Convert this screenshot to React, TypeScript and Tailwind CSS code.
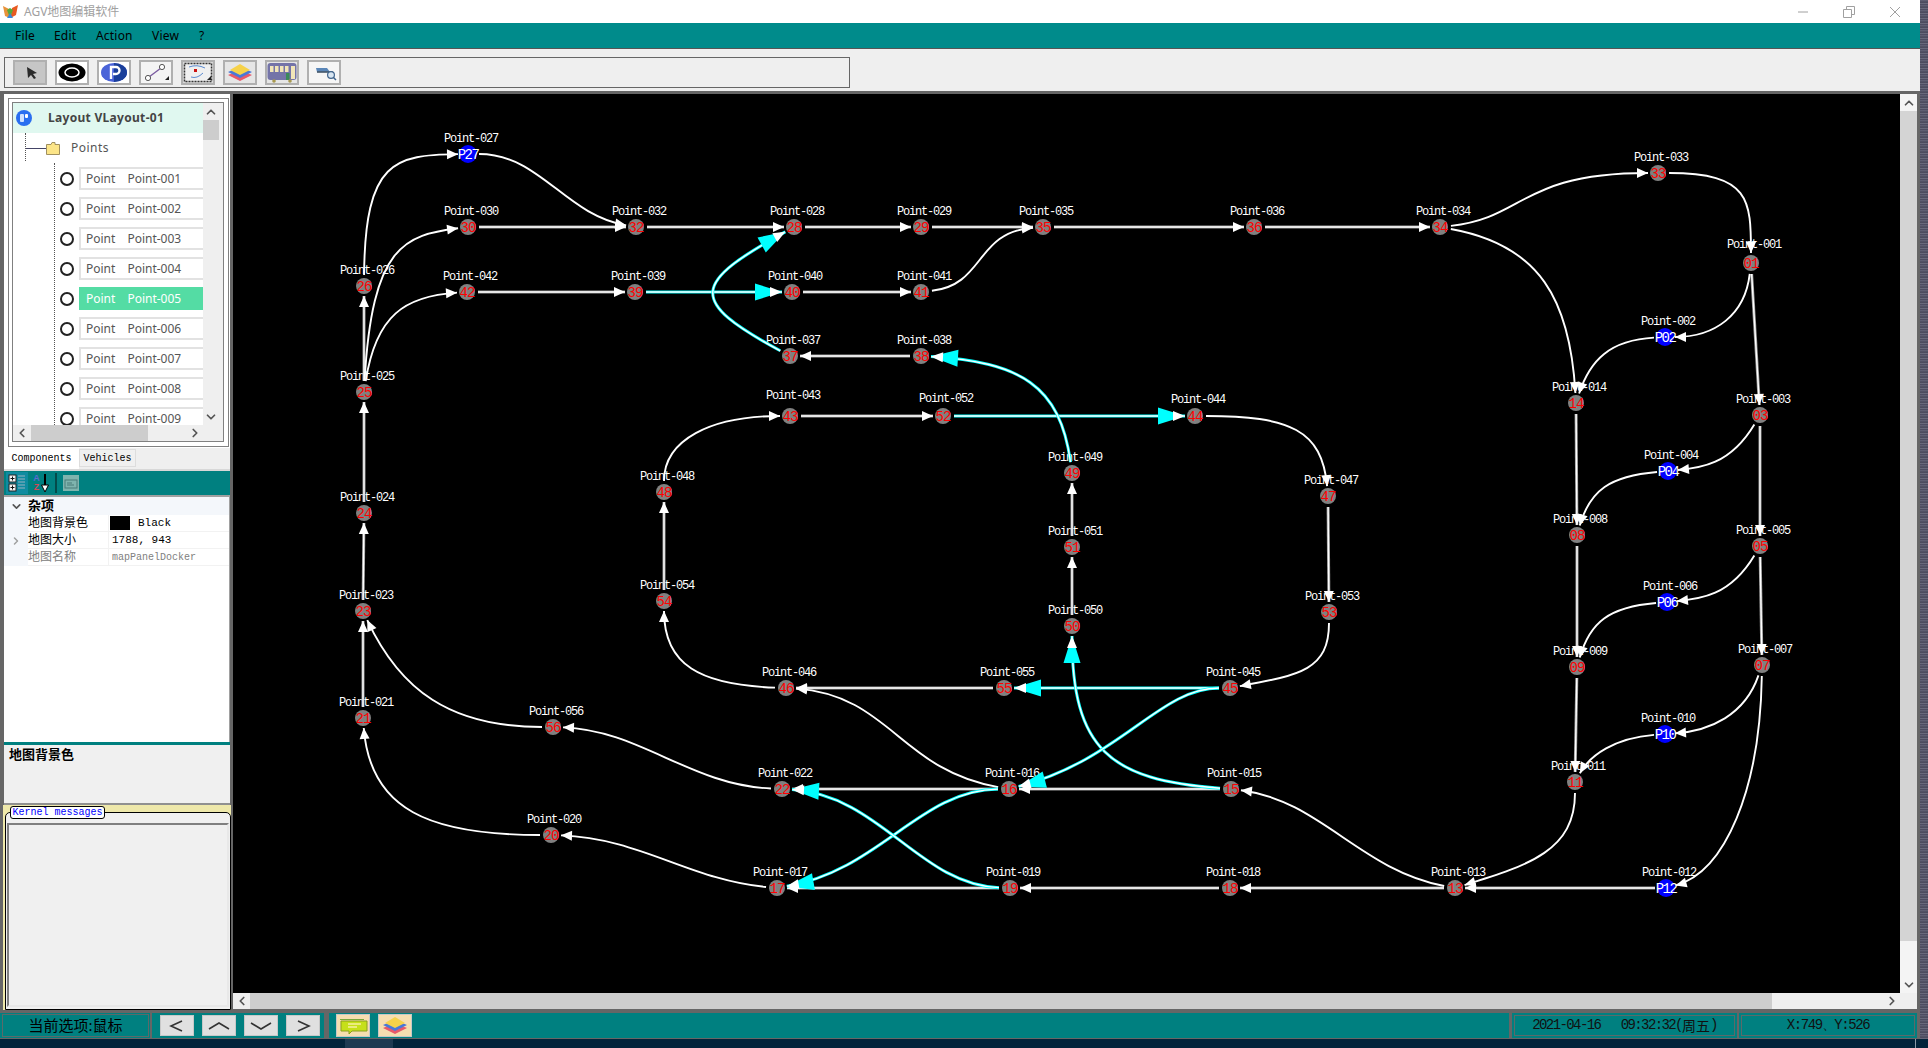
import { ChevronDown, ChevronLeft, ChevronRight, ChevronUp } from "lucide-react";

type Pt = [number, number];

// node id -> page coordinates
const nodes: Record<string, Pt> = {
  "001": [1751, 263], "002": [1665, 337], "003": [1760, 415], "004": [1668, 471], "005": [1760, 546],
  "006": [1667, 602], "007": [1762, 665], "008": [1577, 535], "009": [1577, 667], "010": [1665, 734],
  "011": [1575, 782], "012": [1666, 888], "013": [1455, 888], "014": [1576, 403], "015": [1231, 789],
  "016": [1009, 789], "017": [777, 888], "018": [1230, 888], "019": [1010, 888], "020": [551, 835],
  "021": [363, 718], "022": [782, 789], "023": [363, 611], "024": [364, 513], "025": [364, 392],
  "026": [364, 286], "027": [468, 154], "028": [794, 227], "029": [921, 227], "030": [468, 227],
  "032": [636, 227], "033": [1658, 173], "034": [1440, 227], "035": [1043, 227], "036": [1254, 227],
  "037": [790, 356], "038": [921, 356], "039": [635, 292], "040": [792, 292], "041": [921, 292],
  "042": [467, 292], "043": [790, 416], "044": [1195, 416], "045": [1230, 688], "046": [786, 688],
  "047": [1328, 496], "048": [664, 492], "049": [1072, 473], "050": [1072, 626], "051": [1072, 547],
  "052": [943, 416], "053": [1329, 612], "054": [664, 601], "055": [1004, 688], "056": [553, 727],
};

const parking = ["002", "004", "006", "010", "012", "027"];

// a few labels sit higher than the rest
const labelLift: Record<string, number> = { "043": 5, "052": 2, "044": 1, "001": 3 };

const straight = [
  "030-032", "032-028", "028-029", "029-035", "035-036", "036-034", "042-039", "040-041", "038-037",
  "043-052", "055-046", "016-022", "015-016", "018-019", "013-018", "019-017", "012-013", "025-026",
  "024-025", "023-024", "021-023", "001-003", "003-005", "005-007", "014-008", "008-009", "009-011",
  "047-053", "051-049", "050-051", "054-048",
];

const curves: [string, string, Pt, Pt][] = [
  ["026", "027", [365, 160], [395, 155]],
  ["025", "030", [372, 245], [405, 235]],
  ["025", "042", [376, 315], [405, 296]],
  ["027", "032", [540, 154], [565, 215]],
  ["034", "033", [1525, 218], [1520, 173]],
  ["033", "001", [1750, 173], [1751, 200]],
  ["001", "002", [1745, 315], [1715, 337]],
  ["002", "014", [1610, 340], [1590, 360]],
  ["034", "014", [1540, 245], [1570, 300]],
  ["003", "004", [1730, 465], [1700, 468]],
  ["004", "008", [1610, 476], [1590, 490]],
  ["005", "006", [1730, 596], [1700, 599]],
  ["006", "009", [1609, 607], [1590, 622]],
  ["007", "010", [1745, 715], [1710, 731]],
  ["010", "011", [1615, 738], [1590, 755]],
  ["007", "012", [1760, 790], [1725, 872]],
  ["011", "013", [1575, 850], [1530, 865]],
  ["013", "015", [1360, 870], [1320, 800]],
  ["016", "046", [900, 770], [890, 695]],
  ["022", "056", [690, 785], [640, 730]],
  ["056", "023", [450, 727], [400, 690]],
  ["020", "021", [430, 835], [370, 810]],
  ["017", "020", [690, 880], [640, 838]],
  ["046", "054", [700, 685], [664, 665]],
  ["048", "043", [664, 440], [710, 416]],
  ["044", "047", [1290, 416], [1322, 430]],
  ["053", "045", [1329, 670], [1300, 675]],
  ["041", "035", [985, 285], [975, 232]],
];

const cyanStraight = ["039-040", "052-044", "045-055"];

const cyanCurves: [string, string, Pt, Pt][] = [
  ["037", "028", [686, 300], [693, 283]],
  ["049", "038", [1060, 385], [1020, 362]],
  ["015", "050", [1110, 780], [1072, 750]],
  ["045", "016", [1160, 688], [1120, 760]],
  ["016", "017", [920, 790], [880, 870]],
  ["019", "022", [920, 885], [880, 795]],
];

function towards(a: Pt, b: Pt, d: number): Pt {
  const dx = b[0] - a[0];
  const dy = b[1] - a[1];
  const len = Math.hypot(dx, dy) || 1;
  return [a[0] + (dx / len) * d, a[1] + (dy / len) * d];
}

function Arrow({ tip, from, len, half, fill }: { tip: Pt; from: Pt; len: number; half: number; fill: string }) {
  const base = towards(tip, from, len);
  const nx = -(from[1] - tip[1]);
  const ny = from[0] - tip[0];
  const n = Math.hypot(nx, ny) || 1;
  const a = [base[0] + (nx / n) * half, base[1] + (ny / n) * half];
  const b = [base[0] - (nx / n) * half, base[1] - (ny / n) * half];
  return <polygon points={`${tip[0]},${tip[1]} ${a[0]},${a[1]} ${b[0]},${b[1]}`} fill={fill} />;
}

function Edge({ from, to, c1, c2, cyan }: { from: string; to: string; c1?: Pt; c2?: Pt; cyan?: boolean }) {
  const a = nodes[from];
  const b = nodes[to];
  const s = towards(a, c1 ?? b, 11);
  const e = towards(b, c2 ?? a, 10);
  const d = c1 && c2 ? `M${s[0]} ${s[1]}C${c1[0]} ${c1[1]} ${c2[0]} ${c2[1]} ${e[0]} ${e[1]}` : `M${s[0]} ${s[1]}L${e[0]} ${e[1]}`;
  const back = c2 ?? a;
  return (
    <g fill="none">
      {cyan ? (
        <>
          <path d={d} stroke="#00ffff" strokeWidth={3} />
          <path d={d} stroke="#ffffff" strokeWidth={1.4} />
          <Arrow tip={e} from={back} len={27} half={8.5} fill="#00ffff" />
          <Arrow tip={e} from={back} len={12} half={5} fill="#ffffff" />
        </>
      ) : c1 ? (
        <>
          <path d={d} stroke="#ffffff" strokeWidth={1.9} />
          <Arrow tip={e} from={back} len={11} half={5} fill="#ffffff" />
        </>
      ) : (
        <>
          <path d={d} stroke="#9a9a9a" strokeWidth={3} />
          <path d={d} stroke="#ffffff" strokeWidth={1.4} />
          <Arrow tip={e} from={back} len={11} half={5} fill="#ffffff" />
        </>
      )}
    </g>
  );
}

function MapGraph() {
  const ids = Object.keys(nodes);
  return (
    <svg className="absolute inset-0 font-['Liberation_Mono',monospace]" width={1666} height={899} viewBox="234 94 1666 899">
      {ids.map((id) => (
        <text
          key={id}
          x={nodes[id][0] + 3}
          y={nodes[id][1] - 12 - (labelLift[id] ?? 0)}
          textAnchor="middle"
          fontSize={12}
          letterSpacing={-1.2}
          fill="#ffffff"
        >
          {`Point-${id}`}
        </text>
      ))}
      {straight.map((s) => {
        const [a, b] = s.split("-");
        return <Edge key={s} from={a} to={b} />;
      })}
      {curves.map(([a, b, c1, c2]) => (
        <Edge key={a + b} from={a} to={b} c1={c1} c2={c2} />
      ))}
      {cyanStraight.map((s) => {
        const [a, b] = s.split("-");
        return <Edge key={s} from={a} to={b} cyan />;
      })}
      {cyanCurves.map(([a, b, c1, c2]) => (
        <Edge key={a + b} from={a} to={b} c1={c1} c2={c2} cyan />
      ))}
      {ids.map((id) => {
        const p = parking.includes(id);
        return (
          <g key={id}>
            <circle cx={nodes[id][0]} cy={nodes[id][1]} r={p ? 9 : 8} fill={p ? "#0000ff" : "#808080"} />
            <text
              x={nodes[id][0]}
              y={nodes[id][1] + 5}
              textAnchor="middle"
              fontSize={14}
              letterSpacing={p ? -1.6 : -1}
              fill={p ? "#ffffff" : "#ff0000"}
            >
              {p ? `P${id.slice(1)}` : id.slice(1)}
            </text>
          </g>
        );
      })}
    </svg>
  );
}

function ToolButton({ active, children }: { active?: boolean; children: React.ReactNode }) {
  return (
    <div className={`w-[34px] h-[25px] border-2 border-[#b0b0b0] flex items-center justify-center ${active ? "bg-[#c6c6c6]" : "bg-[#e6e6e6]"}`}>
      {children}
    </div>
  );
}

function Toolbar() {
  return (
    <div className="h-[42px] bg-[#efefef] pt-[8px] pl-[4px] pr-[0px]">
      <div className="w-[846px] h-[31px] border border-[#666666] flex items-center gap-[8px] pl-[8px]">
        <ToolButton active>
          <svg className="ml-[3px]" width="14" height="14" viewBox="0 0 14 14"><path d="M2 1 L12 7 L8 8 L11 12 L9 13 L6 9 L3 12Z" fill="#2a2a2a" /></svg>
        </ToolButton>
        <ToolButton>
          <svg width="30" height="21" viewBox="0 0 30 21">
            <rect width="30" height="21" fill="#ffffff" />
            <ellipse cx="15" cy="10.5" rx="13.5" ry="9" fill="#000000" />
            <ellipse cx="15" cy="10.5" rx="7" ry="4.5" fill="none" stroke="#ffffff" strokeWidth="1.5" />
          </svg>
        </ToolButton>
        <ToolButton>
          <svg width="30" height="21" viewBox="0 0 30 21">
            <rect width="30" height="21" fill="#ffffff" />
            <ellipse cx="15" cy="10.5" rx="13" ry="9.5" fill="#4a63d8" />
            <path d="M15 1 A13 9.5 0 0 1 15 20Z" fill="#1a3f9a" />
            <path d="M12 17V5h5a3.5 3.5 0 0 1 0 7h-3" fill="none" stroke="#ffffff" strokeWidth="2.4" />
          </svg>
        </ToolButton>
        <ToolButton>
          <svg width="30" height="21" viewBox="0 0 30 21">
            <rect width="30" height="21" fill="#f4f4f4" />
            <path d="M8 15 L20 6" stroke="#7a5aa0" strokeWidth="1.3" />
            <circle cx="7" cy="16" r="2.6" fill="#ffffff" stroke="#555555" />
            <circle cx="21" cy="5" r="2.6" fill="#ffffff" stroke="#555555" />
            <path d="M24 18 L28 18 L28 14Z" fill="#222222" />
          </svg>
        </ToolButton>
        <ToolButton>
          <svg width="30" height="21" viewBox="0 0 30 21">
            <rect width="30" height="21" fill="#d8d8d8" />
            <rect x="1.5" y="1.5" width="27" height="18" fill="#f0f0f0" stroke="#333333" strokeWidth="1.5" strokeDasharray="2 1" />
            <path d="M6 5 Q14 2 22 6 M8 15 Q14 17 20 11" fill="none" stroke="#5a8ad0" strokeWidth="1" />
            <rect x="11" y="7" width="3" height="3" fill="#cc1111" />
            <path d="M24 18 L28 18 L28 14Z" fill="#222222" />
          </svg>
        </ToolButton>
        <ToolButton>
          <svg width="26" height="19" viewBox="0 0 26 19">
            <path d="M1 12 L13 7 L25 12 L13 18Z" fill="#e85a6a" />
            <path d="M1 9 L13 4 L25 9 L13 15Z" fill="#4a78d8" />
            <path d="M3 7 L13 1 L23 7 L13 12Z" fill="#f6d24a" />
          </svg>
        </ToolButton>
        <ToolButton>
          <svg width="30" height="21" viewBox="0 0 30 21">
            <rect x="0.5" y="1" width="29" height="17" rx="3" fill="#7474a8" />
            <rect x="3" y="4" width="3.5" height="6" fill="#f2e6b8" />
            <rect x="8" y="4" width="3.5" height="6" fill="#f2e6b8" />
            <rect x="13" y="4" width="3.5" height="6" fill="#f2e6b8" />
            <rect x="18" y="4" width="3.5" height="6" fill="#f2e6b8" />
            <rect x="24" y="4" width="4" height="13" fill="#f2e6b8" />
            <rect x="19" y="11" width="3.5" height="7" fill="#3a8a5a" />
            <circle cx="7" cy="19" r="1.8" fill="#a89a50" />
            <circle cx="23" cy="19" r="1.8" fill="#a89a50" />
          </svg>
        </ToolButton>
        <ToolButton>
          <svg width="30" height="21" viewBox="0 0 30 21">
            <rect width="30" height="21" fill="#f6f6f6" />
            <path d="M7 6 H18 L21 10 H8Z" fill="#5a86b8" />
            <path d="M8 10 H24" stroke="#44576a" strokeWidth="1.6" />
            <circle cx="22" cy="13" r="3.4" fill="#d8e6f2" stroke="#40648c" strokeWidth="1.2" />
            <path d="M24.5 15.5 L27 18" stroke="#40648c" strokeWidth="1.5" />
          </svg>
        </ToolButton>
      </div>
    </div>
  );
}

function TreeRow({ name, selected }: { name: string; selected?: boolean }) {
  return (
    <div className="h-[30px] relative flex items-start pl-[60px] shrink-0">
      <div className="w-[14px] h-[25px] flex items-center">
        <span className="block w-[14px] h-[14px] rounded-full border-2 border-[#222222] bg-white" />
      </div>
      <div
        className={`ml-[5px] mt-[1px] w-[124px] h-[23px] flex items-center gap-[12px] text-[12px] shrink-0 ${
          selected ? "bg-[#54dca4] text-white pl-[7px]" : "bg-white border-2 border-r-0 border-[#e2e2e2] pl-[5px] text-[#555555]"
        }`}
      >
        <span>Point</span>
        <span>{name}</span>
      </div>
    </div>
  );
}

function TreePanel() {
  const rows = ["001", "002", "003", "004", "005", "006", "007", "008", "009"];
  return (
    <div className="h-[354px] bg-white pt-[4px] pl-[4px] pr-[1px] pb-[1px] shrink-0">
      <div className="h-full border border-[#808080] pt-[3px] pl-[3px] pr-[4px] pb-[4px]">
        <div className="h-full border border-[#808080] flex flex-col bg-[#efefef] pl-[0px]">
          <div className="flex-1 flex min-h-0">
            <div className="w-[190px] overflow-hidden bg-white flex flex-col">
              <div className="h-[30px] shrink-0 bg-[#e0f8f0] flex items-center pl-[3px] gap-[16px]">
                <svg width="16" height="16" viewBox="0 0 16 16">
                  <circle cx="8" cy="8" r="8" fill="#2a6ef0" />
                  <rect x="4" y="4" width="4" height="8" rx="1" fill="#cfe0ff" />
                  <rect x="9" y="4" width="3" height="4" rx="1" fill="#ffffff" />
                </svg>
                <span className="text-[12px] font-bold text-[#444444] tracking-[0.3px]">Layout VLayout-01</span>
              </div>
              <div className="h-[30px] shrink-0 flex items-center pl-[12px] relative">
                <span className="absolute left-[12px] top-0 h-[28px] border-l border-dotted border-[#555555]" />
                <span className="block w-[21px] border-t border-[#444466]" />
                <svg width="14" height="14" viewBox="0 0 14 14">
                  <path d="M0.5 3.5 H5 L6 1.5 H9 V3.5 H13.5 V13.5 H0.5Z" fill="#fce588" stroke="#a09060" />
                </svg>
                <span className="ml-[11px] text-[12px] tracking-[0.5px] text-[#555555]">Points</span>
              </div>
              <div className="flex-1 min-h-0 overflow-hidden relative flex flex-col pt-[3px] -ml-[13px]">
                <span className="absolute left-[54px] top-0 bottom-0 border-l border-dotted border-[#555555]" />
                {rows.map((r) => (
                  <TreeRow key={r} name={`Point-${r}`} selected={r === "005"} />
                ))}
              </div>
            </div>
            <div className="w-[16px] bg-[#efefef] flex flex-col items-center">
              <ChevronUp size={14} strokeWidth={3} color="#555555" className="mt-[2px] shrink-0" />
              <div className="w-full h-[20px] mt-[1px] bg-[#cdcdcd]" />
              <div className="flex-1" />
              <ChevronDown size={14} strokeWidth={3} color="#555555" className="mb-[1px]" />
            </div>
          </div>
          <div className="h-[16px] flex items-center bg-[#efefef]">
            <ChevronLeft size={14} strokeWidth={3} color="#555555" className="ml-[2px]" />
            <div className="ml-[2px] w-[117px] h-full bg-[#cdcdcd]" />
            <ChevronRight size={14} strokeWidth={3} color="#555555" className="ml-[40px]" />
          </div>
        </div>
      </div>
    </div>
  );
}

function PropRow({ name, value, swatch, muted, expand }: { name: string; value: string; swatch?: boolean; muted?: boolean; expand?: boolean }) {
  return (
    <div className="h-[17px] flex items-stretch">
      <div className="w-[24px] bg-[#f4f7fb] flex items-center justify-center">
        {expand && <ChevronRight size={12} strokeWidth={3} color="#a0a0a0" />}
      </div>
      <div className={`w-[80px] flex items-center text-[12px] border-b border-[#f2f2f2] ${muted ? "text-[#808080]" : "text-black"}`}>{name}</div>
      <div className={`flex-1 border-l border-b border-[#f2f2f2] flex items-center pl-[3px] font-['Liberation_Mono',monospace] ${muted ? "text-[#808080] text-[10px]" : "text-[11px] text-black"}`}>
        {swatch && <span className="block w-[20px] h-[14px] bg-black -ml-[2px] mr-[8px]" />}
        {value}
      </div>
    </div>
  );
}

function Properties() {
  return (
    <div className="flex-1 min-h-0 flex flex-col bg-white border-t-2 border-r border-[#a0a0a0]">
      <div className="h-[18px] bg-[#f4f7fb] flex items-center font-bold text-[13px] text-black">
        <div className="w-[24px] flex justify-center">
          <ChevronDown size={13} strokeWidth={3} color="#555555" />
        </div>
        杂项
      </div>
      <PropRow name="地图背景色" value="Black" swatch />
      <PropRow name="地图大小" value="1788, 943" expand />
      <PropRow name="地图名称" value="mapPanelDocker" muted />
    </div>
  );
}

function LeftPanel() {
  return (
    <div className="w-[226px] ml-[4px] flex flex-col shrink-0">
      <TreePanel />
      <div className="h-[21px] flex items-start bg-[#efefef] font-['Liberation_Mono',monospace] text-[10px] shrink-0">
        <div className="w-[75px] h-[21px] bg-white flex items-center justify-center text-black">Components</div>
        <div className="w-[57px] h-[18px] mt-[1px] border border-[#dddddd] bg-[#f0f0f0] flex items-center justify-center text-black">Vehicles</div>
      </div>
      <div className="h-[2px] bg-[#d8d8d8] shrink-0" />
      <div className="h-[24px] bg-[#008080] flex items-center shrink-0">
        <div className="ml-[2px] w-[22px] h-[22px] bg-[#0f8ba0] flex items-center justify-center">
          <svg width="18" height="18" viewBox="0 0 18 18">
            <rect x="1" y="1" width="7" height="7" fill="#f4f4f4" stroke="#222222" />
            <rect x="1" y="10" width="7" height="7" fill="#f4f4f4" stroke="#222222" />
            <path d="M2.5 4.5h4M4.5 2.5v4M2.5 13.5h4M4.5 11.5v4" stroke="#111111" />
            <path d="M10 2h7M10 5h7M10 8h7M10 11h7M10 14h7" stroke="#9ab0c0" />
          </svg>
        </div>
        <div className="ml-[4px] w-[9px] flex flex-col items-center text-[9px] leading-[9px] font-bold font-['Liberation_Sans',sans-serif]">
          <span className="text-[#5a6ad0]">A</span>
          <span className="text-[#d04a5a]">Z</span>
        </div>
        <svg width="9" height="20" viewBox="9 0 9 20">
          <path d="M13 1V16" stroke="#000000" strokeWidth="2" />
          <path d="M9.5 12 L13 19 L16.5 12Z" fill="#ffffff" stroke="#000000" />
        </svg>
        <span className="block ml-[5px] w-[2px] h-[20px] bg-[#044a4a]" />
        <svg className="ml-[6px]" width="16" height="16" viewBox="0 0 16 16">
          <rect width="16" height="16" fill="#7fb4ae" />
          <rect x="2" y="5" width="12" height="8" fill="none" stroke="#4a7a78" />
          <path d="M4 8h5M4 10h7" stroke="#4a7a78" />
        </svg>
      </div>
      <Properties />
      <div className="h-[3px] bg-[#008080] shrink-0" />
      <div className="h-[58px] bg-[#f0f0f0] px-[5px] text-[13px] leading-[18px] font-bold text-black shrink-0">地图背景色</div>
      <div className="h-[2px] bg-[#909090] shrink-0" />
      <div className="h-[205px] -ml-[1px] w-[228px] bg-[#eee8aa] pt-[7px] pl-[2px] shrink-0 relative">
        <div className="h-full border border-black rounded-t-[5px] bg-[#f0f0f0] pt-[10px] px-[1px] pb-[2px]">
          <div className="h-full border-2 border-[#808080] border-r-[#e8e8e8] border-b-[#e8e8e8] bg-[#f0f0f0]" />
        </div>
        <div className="absolute left-[7px] top-[1px] w-[95px] h-[13px] rounded-[3px] border border-black bg-white flex items-center justify-center text-[10px] text-[#0000ff] font-['Liberation_Mono',monospace]">
          Kernel messages
        </div>
      </div>
    </div>
  );
}

function MapArea() {
  return (
    <div className="flex-1 flex flex-col ml-[3px] mr-[3px] min-w-0">
      <div className="h-[899px] flex shrink-0">
        <div className="w-[1667px] relative bg-black pl-[1px]">
          <div className="absolute left-[1px] top-0">
            <MapGraph />
          </div>
        </div>
        <div className="w-[17px] bg-[#f4f4f4] flex flex-col items-center">
          <ChevronUp size={14} strokeWidth={3} color="#555555" className="mt-[2px] shrink-0" />
          <div className="w-full mt-[1px] h-[830px] bg-[#d4d4d4]" />
          <div className="flex-1" />
          <ChevronDown size={14} strokeWidth={3} color="#555555" className="mb-[1px]" />
        </div>
      </div>
      <div className="h-[16px] flex items-center bg-[#efefef] shrink-0">
        <div className="w-[17px] flex justify-center">
          <ChevronLeft size={14} strokeWidth={3} color="#555555" />
        </div>
        <div className="w-[1522px] h-full bg-[#cdcdcd]" />
        <div className="w-[128px] flex justify-end pr-[1px]">
          <ChevronRight size={14} strokeWidth={3} color="#555555" />
        </div>
      </div>
    </div>
  );
}

function NavButton({ d }: { d: string }) {
  return (
    <div className="w-[34px] h-[21px] bg-[#e0e0e0] border border-[#c8c8c8] flex items-center justify-center">
      <svg width="24" height="14" viewBox="0 0 24 14">
        <path d={d} fill="none" stroke="#333333" strokeWidth="1.6" />
      </svg>
    </div>
  );
}

function StatusBar() {
  return (
    <div className="h-[29px] bg-[#666666] pt-[3px] flex shrink-0">
      <div className="w-[150px] h-[25px] bg-[#008080] p-[1px] pl-[2px]">
        <div className="h-full border border-[#5a6a6a] flex items-center justify-center text-[15px] text-black pb-[1px]">当前选项:鼠标</div>
      </div>
      <div className="w-[172px] h-[25px] ml-[2px] bg-[#008080] flex items-center gap-[8px] pl-[8px]">
        <NavButton d="M17 2 L6 7 L17 12" />
        <NavButton d="M2 10 L12 4 L22 10" />
        <NavButton d="M2 4 L12 10 L22 4" />
        <NavButton d="M7 2 L18 7 L7 12" />
      </div>
      <div className="w-[1180px] h-[25px] ml-[5px] bg-[#008080] flex items-center gap-[8px] pl-[7px]">
        <div className="w-[34px] h-[23px] bg-[#f6deb0] border border-[#c8c8c8] flex items-center justify-center">
          <svg width="30" height="19" viewBox="0 0 30 19">
            <path d="M2 3 H26 V4 H2Z" fill="#7aa83a" />
            <path d="M3 5 H29 V15 H14 L11 18 V15 H3Z" fill="#c6e01a" stroke="#8aa020" />
            <path d="M10 8 H23 M10 11 H19" stroke="#f6f0a0" strokeWidth="1.4" />
          </svg>
        </div>
        <div className="w-[34px] h-[23px] bg-[#f6deb0] border border-[#c8c8c8] flex items-center justify-center">
          <svg width="26" height="19" viewBox="0 0 26 19">
            <path d="M1 12 L13 7 L25 12 L13 18Z" fill="#e85a6a" />
            <path d="M1 9 L13 4 L25 9 L13 15Z" fill="#4a78d8" />
            <path d="M3 7 L13 1 L23 7 L13 12Z" fill="#f6d24a" />
          </svg>
        </div>
      </div>
      <div className="w-[225px] h-[25px] ml-[3px] bg-[#008080] p-[2px]">
        <div className="h-full border border-[#5a6a6a] flex items-center justify-center font-['Liberation_Mono',monospace] text-[14px] tracking-[-1.6px] whitespace-pre text-[#111111]">
          2021-04-16   09:32:32(<span className="font-['Noto_Sans_CJK_SC',sans-serif] text-[14px] tracking-normal">周五</span>)
        </div>
      </div>
      <div className="w-[178px] h-[25px] ml-[2px] bg-[#008080] p-[2px]">
        <div className="h-full border border-[#5a6a6a] flex items-center justify-center font-['Liberation_Mono',monospace] text-[14px] tracking-[-1.4px] text-[#111111]">
          X:749、Y:526
        </div>
      </div>
    </div>
  );
}

export default function App() {
  return (
    <div className="w-[1928px] h-[1048px] bg-[#02243b] overflow-hidden flex flex-col font-['Noto_Sans','Noto_Sans_CJK_SC',sans-serif]">
      <div className="h-[1039px] flex shrink-0">
        <div className="w-[1920px] flex flex-col bg-[#666666] shrink-0">
          {/* title bar */}
          <div className="h-[23px] bg-white flex items-center shrink-0">
            <svg className="ml-[2px]" width="17" height="17" viewBox="0 0 17 17">
              <path d="M1 3 L7 6 L8 15 L3 13Z" fill="#e8923a" />
              <path d="M16 2 L10 5 L8.5 15 L14 12Z" fill="#e85a20" />
              <path d="M5 7 L8 15 L11 7 L8 5Z" fill="#5aa83a" />
              <path d="M8 10 L5 15 H11Z" fill="#3a88d8" />
            </svg>
            <span className="ml-[5px] text-[12px] text-[#a0a0a0]">AGV地图编辑软件</span>
            <div className="flex-1" />
            <svg className="mr-[34px]" width="12" height="12" viewBox="0 0 12 12"><path d="M1 6H11" stroke="#a0a0a0" /></svg>
            <svg className="mr-[34px]" width="12" height="12" viewBox="0 0 12 12"><path d="M0.5 3.5H8.5V11.5H0.5ZM3.5 3V0.5H11.5V8.5H9" fill="none" stroke="#a0a0a0" /></svg>
            <svg className="mr-[19px]" width="12" height="12" viewBox="0 0 12 12"><path d="M1 1L11 11M11 1L1 11" stroke="#a0a0a0" /></svg>
          </div>
          {/* menu */}
          <div className="h-[25px] bg-[#008b8b] border-b border-[#555555] box-content flex items-center pl-[15px] text-[12px] text-black shrink-0 tracking-[0.2px]">
            <span className="w-[39px]">File</span>
            <span className="w-[42px]">Edit</span>
            <span className="w-[56px]">Action</span>
            <span className="w-[47px]">View</span>
            <span>?</span>
          </div>
          <Toolbar />
          <div className="h-[3px] shrink-0" />
          <div className="h-[916px] flex shrink-0">
            <LeftPanel />
            <MapArea />
          </div>
          <StatusBar />
        </div>
        <div className="flex-1 bg-[#55556c] bg-[repeating-linear-gradient(0deg,#77778a_0px,#3d3d50_2px,#66667a_3px,#44445a_5px)]" />
      </div>
      <div className="h-[9px] relative overflow-hidden">
        <div className="absolute left-[345px] top-0 w-[48px] h-[9px] bg-[#1d3a52]" />
        <span className="absolute left-[1818px] top-[4px] text-[13px] text-white font-['Liberation_Sans',sans-serif] tracking-[1px]">9:32</span>
        <div className="absolute left-[1915px] top-0 w-px h-[9px] bg-[#8a9aa8]" />
      </div>
    </div>
  );
}
